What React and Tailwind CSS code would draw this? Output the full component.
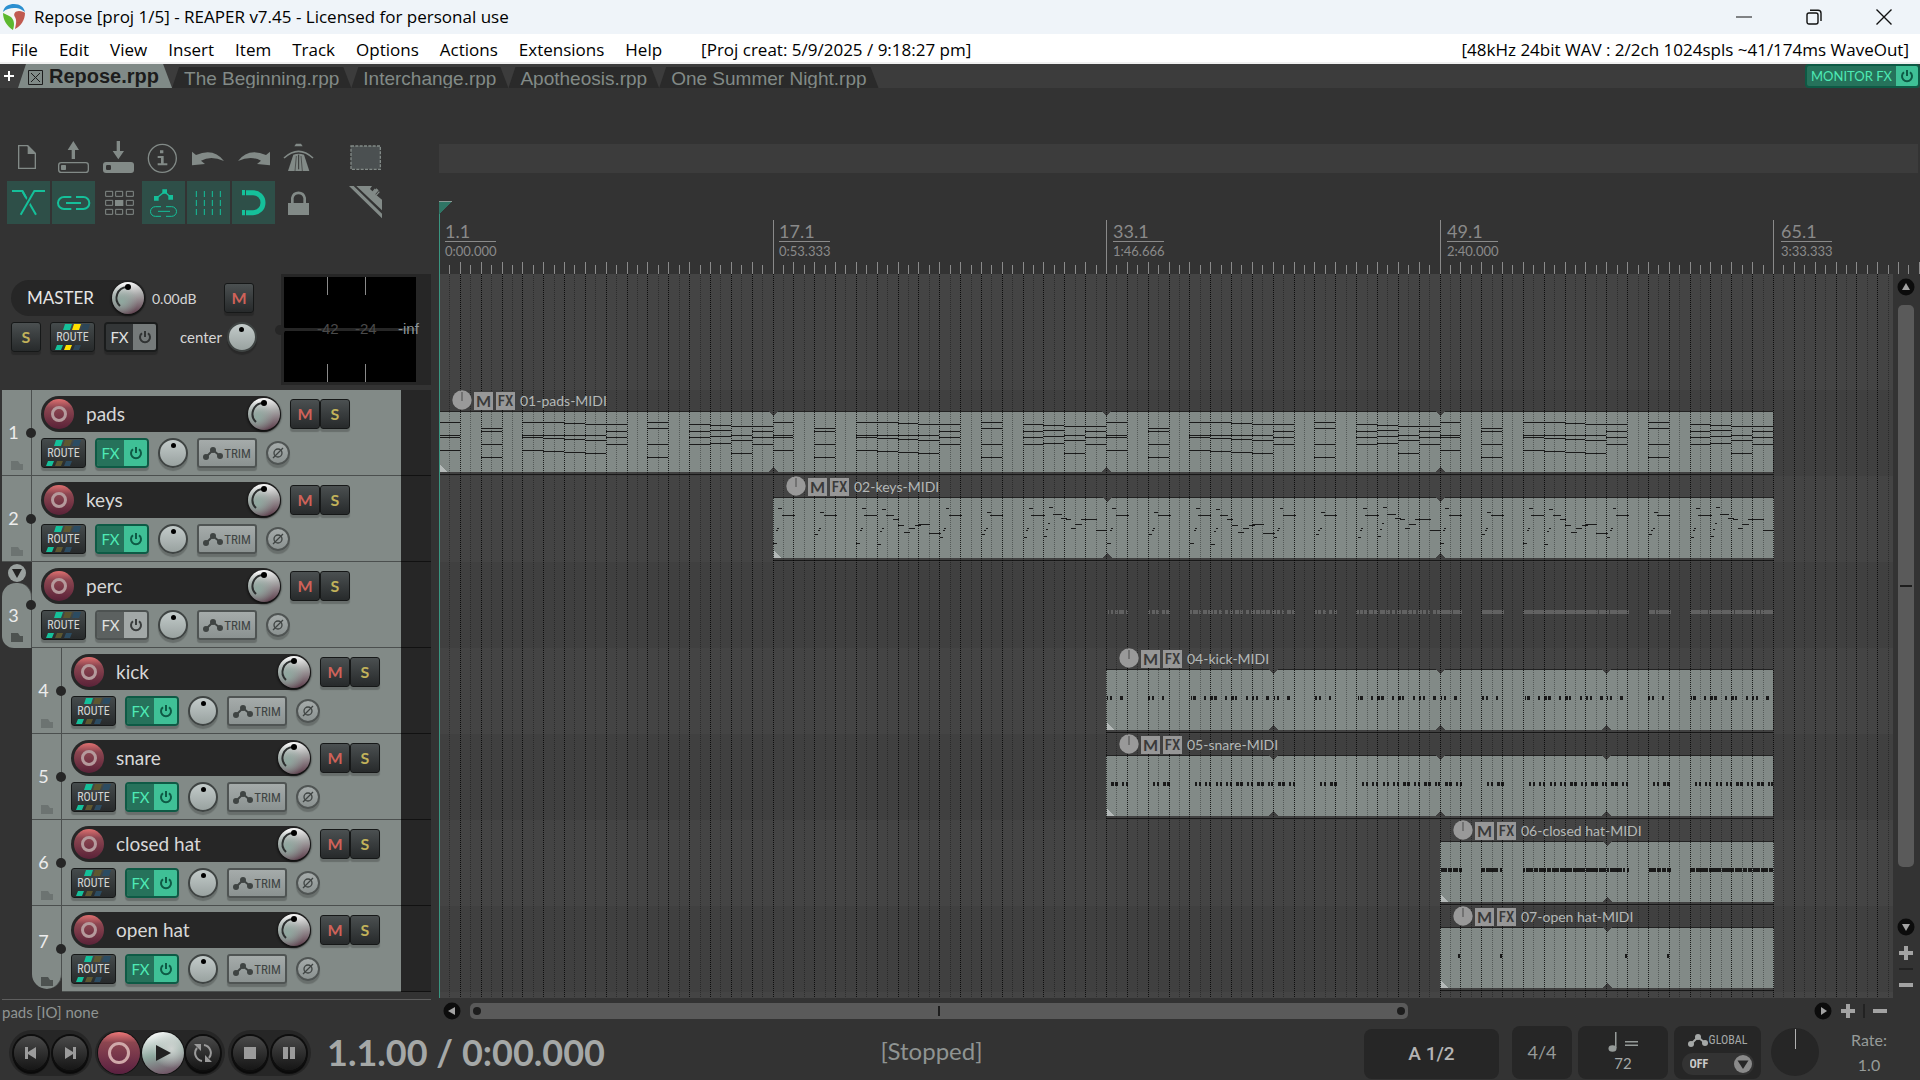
import React from "react";

const BAR = 333.5 / 16;

/* ---------- small drawings ---------- */

function Logo() {
  return (
    <svg viewBox="0 0 24 28" className="h-7 w-6 shrink-0" aria-hidden="true">
      <path d="M1 10C1 4 6 1 12 1s11 3 11 8c0 8-5 15-11 18C6 24 1 17 1 10z" fill="#f4f6f6" />
      <path d="M1 9C2 3 7 1 12 1c6 0 10 3 11 8-5-4-8-4-11-4C8 5 4 6 1 9z" fill="#2b8fd0" />
      <path d="M1 10c0 7 4 13 10 17 2-6 1-10-2-13C6 12 3 11 1 10z" fill="#5db82f" />
      <path d="M23 10c0 7-4 13-10 16 1-5 2-8 0-12-2-3 0-6 4-6 3 0 5 1 6 2z" fill="#c05a50" />
    </svg>
  );
}

function Power({ className }) {
  return (
    <svg viewBox="0 0 14 14" className={className} fill="none" stroke="currentColor" strokeWidth="2" aria-hidden="true">
      <path d="M4 3.2a5 5 0 1 0 6 0M7 1v6" />
    </svg>
  );
}

function Envelope({ className }) {
  return (
    <svg viewBox="0 0 20 13" className={className} fill="currentColor" stroke="currentColor" aria-hidden="true">
      <path d="M3 10L10 3l7 6" fill="none" strokeWidth="2" />
      <circle cx="3" cy="10" r="3" stroke="none" />
      <circle cx="10" cy="3" r="3" stroke="none" />
      <circle cx="17" cy="9" r="3" stroke="none" />
    </svg>
  );
}

const G = "#828a87";
const T = "#15c09a";
const TBG = "#2e4f48";

const tools = [
  { label: "New project", art: <><path d="M35 29H62L85 52V97H35Z" fill="none" stroke={G} strokeWidth="4" /><path d="M62 27L87 54H62Z" fill={G} /></> },
  { label: "Open project", art: <><path d="M64 15L81 42H69V69H59V42H47Z" fill={G} /><rect x="20" y="80" width="89" height="29" rx="8" fill="none" stroke={G} strokeWidth="4" /><rect x="27" y="87" width="15" height="15" rx="2" fill={G} /></> },
  { label: "Save project", art: <><path d="M59 15H69V45H81L64 70L47 45H59Z" fill={G} /><rect x="18" y="78" width="93" height="33" rx="9" fill={G} /><rect x="27" y="87" width="15" height="15" rx="4" fill="#333" /></> },
  { label: "Project settings", art: <><circle cx="61" cy="67" r="42" fill="none" stroke={G} strokeWidth="4" /><path d="M54 43h10v9H54zM47 60h18v22h11v6H47v-6h10V66H47z" fill={G} /></> },
  { label: "Undo", art: <path d="M15 47V88L54 84L42 74Q72 58 111 75Q80 34 27 57Z" fill={G} /> },
  { label: "Redo", art: <path d="M114 47V88L75 84L87 74Q57 58 18 75Q49 34 102 57Z" fill={G} /> },
  { label: "Metronome", art: <><path d="M57 23H72L77 31H52Z" fill={G} /><path d="M21 66Q65 26 108 66" fill="none" stroke={G} strokeWidth="5" /><path d="M49 56Q65 50 81 56L97 105H33Z" fill={G} /><path d="M65 56V100" stroke="#333" strokeWidth="3" /><path d="M58 60L54 105M72 60L76 105" stroke="#333" strokeWidth="2" /></> },
  { label: "Marquee selection", art: <rect x="21" y="30" width="88" height="70" fill="#4b5051" stroke={G} strokeWidth="4" strokeDasharray="9 4" /> },
  { label: "Auto crossfade", on: true, art: <g fill="none" strokeWidth="6"><path d="M15 30H46L87 101" stroke={T} /><path d="M82 30L41 101" stroke={TBG} strokeWidth="15" /><path d="M114 30H82L41 101" stroke={T} /><path d="M15 30H46L56 48" stroke={T} /></g> },
  { label: "Item grouping", on: true, art: <path d="M58 48H36A18 18 0 0 0 36 84H58M72 48H94A18 18 0 0 1 94 84H72M42 66H87" fill="none" stroke={T} strokeWidth="6" /> },
  { label: "Ripple editing", art: <><g fill="none" stroke={G} strokeWidth="3"><path d="M26 31h21v15H26zM56 31h21v15H56zM88 31h21v15H88zM26 58h21v15H26zM88 58h21v15H88zM26 85h21v15H26zM56 85h21v15H56zM88 85h21v15H88z" /></g><rect x="54" y="57" width="25" height="18" fill={G} /></> },
  { label: "Move envelopes with items", on: true, art: <><path d="M61 25h14v13H61zM36 45h14v14H36zM79 42h14v14H79z" fill={T} /><path d="M43 52L68 32L86 49" fill="none" stroke={T} strokeWidth="4" /><path d="M57 77H40A14 14 0 0 0 40 106H57M72 77H89A14 14 0 0 1 89 106H72M48 91H84" fill="none" stroke={T} strokeWidth="3" /></> },
  { label: "Grid lines", on: true, art: <path d="M28 30V102M52 30V102M76 30V102M100 30V102" stroke={T} strokeWidth="3" strokeDasharray="18 9" /> },
  { label: "Snap", on: true, art: <><path d="M42 35H63A30 30 0 0 1 63 95H42" fill="none" stroke={T} strokeWidth="15" /><path d="M30 27h9v16h-9zM30 87h9v16h-9z" fill={T} /></> },
  { label: "Lock", art: <><path d="M46 68V51A19 20 0 0 1 83 51V68" fill="none" stroke={G} strokeWidth="8" /><rect x="33" y="66" width="63" height="36" fill={G} /></> },
  { label: "Razor edit", art: <g fill={G}><path d="M15 15H29L114 98V112ZM37 15H84L78 24L88 33L97 22L104 28L94 40L114 56V88Z" /><path d="M94 24L84 36M106 32L96 43" stroke={G} strokeWidth="4" /></g> },
];

function Tool({ tool }) {
  return (
    <button aria-label={tool.label} className={tool.on ? "block size-[43px] bg-[#2e4f48]" : "block size-[43px]"}>
      <svg viewBox="0 0 129 129" className="size-full" aria-hidden="true">{tool.art}</svg>
    </button>
  );
}

/* ---------- shared controls ---------- */

function VolumeKnob({ label }) {
  return (
    <label className="relative block size-8 rounded-full bg-[radial-gradient(circle_at_30%_60%,#8fa89f_0%,transparent_55%),linear-gradient(170deg,#ffffff_5%,#a9a9a9_45%,#5d3e4c_95%)] shadow-[0_1px_2px_1px_#111]">
      <svg viewBox="0 0 32 32" className="size-full" fill="none" aria-hidden="true">
        <path d="M15 5A11 11 0 0 0 8 24" stroke="#2c2f2f" strokeWidth="2" />
        <circle cx="16" cy="5" r="3" fill="#000" />
      </svg>
      <input type="range" aria-label={label} className="absolute inset-0 size-full opacity-0" />
    </label>
  );
}

function PanKnob({ label }) {
  return (
    <label className="relative block size-[30px] shrink-0 rounded-full border-2 border-[#3f4443] bg-linear-to-b from-[#c3cbca] to-[#99a2a0] shadow-[0_3px_1px_rgba(0,0,0,0.2)]">
      <span className="mx-auto mt-[3px] block size-[5px] rounded-full bg-black" />
      <input type="range" aria-label={label} className="absolute inset-0 size-full opacity-0" />
    </label>
  );
}

const squareButton =
  "flex size-[30px] shrink-0 items-center justify-center rounded-[3px] border border-[#161818] bg-linear-to-b from-[#4b5051] to-[#272a2b] shadow-[0_3px_1px_rgba(0,0,0,0.2)] font-['Lato',sans-serif] font-bold text-base leading-none";

function MuteButton() {
  return <button aria-label="Mute" className={squareButton + " text-[#cf6259]"}>M</button>;
}

function SoloButton() {
  return <button aria-label="Solo" className={squareButton + " text-[#c2b25a]"}>S</button>;
}

function RouteButton({ bright }) {
  const second = bright ? "#ffe000" : "#5d5730";
  const third = bright ? "#2c4658" : "#2c4c62";
  return (
    <button className="relative flex h-[30px] w-[45px] shrink-0 items-center justify-center rounded-[3px] border border-[#161818] bg-linear-to-b from-[#454b4c] to-[#272a2b] font-['Roboto_Condensed','Roboto',sans-serif] text-[12px] leading-none text-[#d2d5d4] shadow-[0_3px_1px_rgba(0,0,0,0.2)]">
      <svg viewBox="0 0 43 28" className="absolute inset-0 size-full" aria-hidden="true">
        <path d="M14 1h7l-2 6h-7zM6 22h6l-2 5H4z" fill="#15c09a" />
        <path d="M23 1h7l-2 6h-7zM15 22h6l-2 5h-6z" fill={second} />
        <path d="M32 1h7l-2 6h-7zM24 22h6l-2 5h-6z" fill={third} />
      </svg>
      <span className="relative">ROUTE</span>
    </button>
  );
}

const fxTones = {
  green: ["border-[#0e5a45]", "bg-[#26725b] text-[#4eeab5]", "bg-[#3fc096] text-[#0e5a45]"],
  grey: ["border-[#4d5251]", "bg-[#5c6160] text-[#e0e2e1]", "bg-[#a2a8a7] text-[#3a3d3d]"],
  dark: ["border-[#1a1c1c]", "bg-[#333637] text-[#e0e2e1]", "bg-[#757a7a] text-[#303333]"],
};

function FxButton({ tone }) {
  const [edge, left, right] = fxTones[tone];
  return (
    <span className={"flex h-[30px] w-[54px] shrink-0 overflow-hidden rounded-[4px] border-2 font-['Lato',sans-serif] text-[15px] leading-none shadow-[0_3px_1px_rgba(0,0,0,0.2)] " + edge}>
      <button className={"flex flex-1 items-center justify-center " + left}>FX</button>
      <button aria-label="Bypass FX" className={"flex w-[23px] items-center justify-center " + right}>
        <Power className="size-3.5" />
      </button>
    </span>
  );
}

/* ---------- header ---------- */

function TitleBar() {
  return (
    <div className="flex h-[34px] items-center bg-[#eff4f9] font-['Open_Sans',sans-serif] text-[17px] text-black">
      <div className="flex flex-1 items-center gap-2 pl-0.5">
        <Logo />
        <h1>Repose [proj 1/5] - REAPER v7.45 - Licensed for personal use</h1>
      </div>
      <div className="flex items-center gap-[54px] pr-7">
        <button aria-label="Minimize"><svg viewBox="0 0 16 16" className="size-4"><path d="M0 8h16" stroke="#111" /></svg></button>
        <button aria-label="Restore">
          <svg viewBox="0 0 16 16" className="size-4" fill="none" stroke="#111" strokeWidth="1.4">
            <rect x="1" y="4" width="11" height="11" rx="2" /><path d="M4 1.2h8a3 3 0 0 1 3 3V12" />
          </svg>
        </button>
        <button aria-label="Close"><svg viewBox="0 0 16 16" className="size-4"><path d="M.5.5l15 15M15.500.5l-15 15" stroke="#111" strokeWidth="1.4" /></svg></button>
      </div>
    </div>
  );
}

const menus = ["File", "Edit", "View", "Insert", "Item", "Track", "Options", "Actions", "Extensions", "Help"];

function MenuBar() {
  return (
    <nav className="flex h-[30px] items-center justify-between border-b-2 border-[#f0f0f0] bg-white pt-1 pr-[11px] pl-[11px] font-['Open_Sans',sans-serif] text-[17px] leading-6 text-black">
      <div className="flex gap-[21px]">
        {menus.map((m) => <button key={m}>{m}</button>)}
        <span className="ml-[18px]">[Proj creat: 5/9/2025 / 9:18:27 pm]</span>
      </div>
      <span>[48kHz 24bit WAV : 2/2ch 1024spls ~41/174ms WaveOut]</span>
    </nav>
  );
}

function Tabs() {
  return (
    <div className="flex h-6 items-stretch bg-[#3c3c3c] font-['Liberation_Sans',sans-serif]">
      <button aria-label="New project tab" className="flex w-[18px] items-center justify-center text-white">
        <svg viewBox="0 0 10 10" className="size-2.5"><path d="M0 5h10M5 0v10" stroke="#fff" strokeWidth="2" /></svg>
      </button>
      <button className="flex items-center gap-1.5 bg-[#808a87] pr-[13px] pl-[10px] text-[20px] leading-6 font-bold text-[#1c1c1c] [clip-path:polygon(8px_0,calc(100%_-_9px)_0,100%_100%,0_100%)]">
        <svg viewBox="0 0 15 15" className="mt-0.5 size-[15px]" fill="none" stroke="#1c1c1c"><path d="M.5.5h14v14H.5zM3 3l9 9M12 3l-9 9" /></svg>
        Repose.rpp
      </button>
      {["The Beginning.rpp", "Interchange.rpp", "Apotheosis.rpp", "One Summer Night.rpp"].map((t) => (
        <button key={t} className="mt-[3px] h-[21px] overflow-hidden bg-[#2a2a2a] px-3 text-[19px] leading-6 whitespace-nowrap text-[#828a87] [clip-path:polygon(7px_0,calc(100%_-_8px)_0,100%_100%,0_100%)]">
          {t}
        </button>
      ))}
      <div className="ml-auto flex overflow-hidden rounded-[4px] border-2 border-[#0e5a45] font-['Lato',sans-serif] text-[13px] leading-none">
        <button className="bg-[#26725b] px-1 text-[#4eeab5]">MONITOR FX</button>
        <button aria-label="Bypass monitor FX" className="flex w-[22px] items-center justify-center bg-[#3fc096] text-[#0e5a45]">
          <Power className="size-3.5" />
        </button>
      </div>
    </div>
  );
}

/* ---------- track panels ---------- */

function Master() {
  return (
    <section className="flex h-[116px] pl-[11px]">
      <div className="flex w-[270px] flex-col gap-1.5 pt-1.5">
        <div className="flex items-center">
          <div className="flex h-9 w-[135px] items-center justify-between rounded-full bg-[#262626] pr-0.5 pl-4 text-[17px] text-[#e6e6e6]">
            MASTER
            <VolumeKnob label="Master volume" />
          </div>
          <span className="ml-1.5 flex-1 text-[14px] text-[#d6d6d6]">0.00dB</span>
          <div className="mr-[27px]"><MuteButton /></div>
        </div>
        <div className="flex items-center gap-[9px]">
          <SoloButton />
          <RouteButton bright />
          <FxButton tone="dark" />
          <span className="ml-[13px] text-[15px] text-[#d6d6d6]">center</span>
          <div className="-ml-1"><PanKnob label="Master pan" /></div>
        </div>
      </div>
      <div className="relative h-[111px] w-[150px] bg-[#262626] p-[3px] font-['Liberation_Sans',sans-serif] text-[15px]">
        <svg viewBox="0 0 132 105" className="block h-[105px] w-[132px] bg-black" aria-hidden="true">
          <path d="M43.500 0v18M81.500 0v18M43.500 87v18M81.500 87v18" stroke="#8a8a8a" />
          <path d="M0 52.500h132" stroke="#262626" strokeWidth="3" />
        </svg>
        <span className="absolute top-[51px] -left-1.5 size-2.5 rounded-full bg-[#262626]" />
        <span className="absolute top-[44px] left-9 text-[#4a4a4a]">-42</span>
        <span className="absolute top-[44px] left-[74px] text-[#4a4a4a]">-24</span>
        <span className="absolute top-[44px] left-[117px] text-[#8f979a]">-inf</span>
      </div>
    </section>
  );
}

function Folder({ strong }) {
  return (
    <svg viewBox="0 0 12 9" className="absolute bottom-1.5 left-[9px] h-[9px] w-3" aria-hidden="true">
      <path d="M0 0h7l2 3h3v6H0z" fill={strong ? "#4d5250" : "#6c7371"} />
    </svg>
  );
}

function TrackPanel({ n, name, child, folder, last, fx }) {
  return (
    <section className={child ? "flex h-[86px] pl-8" : "flex h-[86px] pl-0.5"}>
      <div className="relative w-[30px] shrink-0">
        {folder && (
          <button aria-label="Collapse folder" className="absolute top-0.5 left-1.5 flex size-[18px] items-center justify-center rounded-full bg-[#9aa19f]">
            <svg viewBox="0 0 10 9" className="h-[9px] w-2.5"><path d="M0 0h10L5 9z" fill="#222" /></svg>
          </button>
        )}
        <div
          className={
            folder
              ? "mt-[21px] flex h-[65px] items-center justify-center rounded-t-[14px] rounded-bl-xl border-r border-[#4b4f4e] bg-[#828a87]"
              : last
                ? "flex h-[83px] items-center justify-center rounded-b-[15px] border-r border-[#4b4f4e] bg-[#828a87] pb-3"
                : "flex h-[86px] items-center justify-center border-r border-b border-[#4b4f4e] bg-[#828a87]"
          }
        >
          <span className="pr-1.5 pb-0.5 text-[18px] leading-none text-[#ececec]">{n}</span>
        </div>
        <Folder strong={folder || last} />
        <span className="absolute top-[38px] -right-1 z-10 size-2.5 rounded-full bg-[#262626]" />
      </div>
      <div className="flex flex-1 flex-col gap-1.5 border-b border-[#4b4f4e] bg-[#828a87] pt-1.5 pl-[9px]">
        <div className="flex items-center">
          <div className="flex h-9 w-60 items-center rounded-full bg-[#262626] pr-px pl-[3px]">
            <button aria-label="Record arm" className="flex size-[30px] items-center justify-center rounded-full bg-linear-to-b from-[#e07070] via-[#8c4650] via-30% to-[#5a2238]">
              <span className="size-4 rounded-full border-[3px] border-[#b59a9c]" />
            </button>
            <span className="flex-1 pl-3 text-[19px] text-[#d8d8d8]">{name}</span>
            <VolumeKnob label={name + " volume"} />
          </div>
          <div className="ml-[9px] flex"><MuteButton /><SoloButton /></div>
        </div>
        <div className="flex items-center gap-[9px]">
          <RouteButton />
          <FxButton tone={fx} />
          <PanKnob label={name + " pan"} />
          <button className="flex h-[30px] w-[60px] items-center justify-center gap-px rounded-[3px] border-2 border-[#4f5453] bg-linear-to-b from-[#a5abaa] to-[#8b9291] font-['Roboto_Condensed','Roboto',sans-serif] text-[13px] leading-none text-[#3f4443] shadow-[0_3px_1px_rgba(0,0,0,0.2)]">
            <Envelope className="h-[13px] w-5" />
            TRIM
          </button>
          <button aria-label="Phase" className="flex size-6 items-center justify-center rounded-full border-2 border-[#4f5453] bg-linear-to-b from-[#a5abaa] to-[#8b9291] text-[#3f4443] shadow-[0_3px_1px_rgba(0,0,0,0.2)]">
            <svg viewBox="0 0 12 12" className="size-3" fill="none" stroke="currentColor" strokeWidth="1.3"><circle cx="6" cy="6" r="4" /><path d="M1 11L11 1" /></svg>
          </button>
        </div>
      </div>
      <div className="mr-2 w-[30px] border-b border-[#111] bg-[#262626]" />
    </section>
  );
}

/* ---------- notes ---------- */

/* [first bar, last bar, y] for each held chord tone */
const padNotes = [
  [0, 1, 11], [0, 1, 24], [0, 1, 26], [0, 1, 39],
  [2, 3, 17], [2, 3, 20], [2, 3, 33], [2, 3, 46],
  [4, 6, 11], [6, 7, 12], [7, 9, 13], [4, 8, 24], [8, 9, 20],
  [4, 5, 26], [5, 6, 27], [6, 7, 28], [7, 8, 29], [8, 9, 26],
  [4, 5, 39], [5, 6, 40], [6, 7, 41], [7, 8, 42], [8, 9, 33],
  [10, 11, 11], [10, 11, 17], [10, 11, 33], [10, 11, 46],
  [12, 13, 13], [12, 13, 20], [12, 13, 26], [12, 13, 33],
  [13, 14, 14], [13, 14, 19], [13, 14, 25], [13, 14, 32],
  [14, 16, 15], [14, 15, 24], [14, 15, 29], [14, 15, 42],
  [15, 16, 20], [15, 16, 26], [15, 16, 33],
].map(([a, b, y]) => [a * BAR, (b - a) * BAR, y]);

/* [x, width, y] */
const keyNotes = [
  [0, 4, 46], [3, 2, 33], [4, 2, 31], [5, 4, 11], [9, 13, 18],
  [42, 3, 37], [45, 2, 33], [46, 2, 31], [47, 4, 15], [51, 13, 18],
  [83, 4, 46], [87, 2, 33], [88, 2, 31], [89, 4, 11], [91, 13, 18],
  [104, 4, 47], [107, 2, 34], [109, 2, 31], [109, 4, 12], [113, 8, 18], [120, 6, 22],
  [125, 6, 28], [131, 6, 35], [136, 6, 31], [142, 6, 28], [146, 11, 27], [156, 12, 36],
  [167, 3, 40], [170, 2, 33], [171, 2, 31], [173, 3, 11], [176, 13, 18],
  [209, 3, 37], [211, 2, 33], [213, 2, 31], [214, 4, 15], [217, 13, 18],
  [251, 3, 40], [253, 2, 33], [254, 2, 31], [256, 4, 11], [258, 14, 18],
  [271, 3, 39], [273, 2, 32], [275, 2, 26], [276, 4, 10], [280, 9, 17], [288, 6, 21],
  [293, 5, 22], [298, 5, 31], [302, 7, 27], [308, 16, 22], [323, 11, 33],
];

const kickHits = [[1, 1], [4, 2], [14, 3], [42, 2], [46, 2], [56, 2], [85, 1], [87, 3], [98, 2], [104, 3], [108, 3], [119, 2], [125, 3], [129, 2], [140, 2], [146, 2], [150, 2], [160, 3]];
const snareHits = [[5, 3], [9, 3], [16, 2], [20, 2], [47, 2], [51, 2], [57, 3], [61, 3], [89, 2], [93, 2], [99, 2], [103, 2], [110, 2], [114, 2], [120, 2], [124, 2], [130, 3], [134, 3], [141, 2], [145, 2], [151, 3], [155, 3], [162, 2], [165, 2]];

/* run edges, three units to the pixel */
const runs = (edges) => edges.map(([a, b]) => [a / 3, (b - a) / 3]);
const closedHits = runs([
  [2, 20], [23, 35], [38, 53], [56, 65], [123, 136], [139, 176], [180, 187], [248, 254], [257, 278], [281, 293], [296, 317], [320, 332], [335, 356],
  [359, 395], [398, 434], [437, 473], [476, 497], [500, 506], [509, 545], [548, 554], [560, 566], [626, 647], [650, 662], [665, 677], [680, 692],
  [749, 764], [767, 803], [806, 842], [845, 881], [884, 905], [908, 920], [923, 935], [938, 959], [962, 983], [986, 999],
]);
const openHits = runs([[53, 60], [179, 186], [554, 560], [680, 686]]);

/* run edges, on a scale of 2.306 units to the pixel */
const percRuns = [
  [18, 22], [25, 31], [34, 42], [45, 55], [60, 64], [111, 116], [119, 127], [130, 136], [143, 151], [153, 161], [208, 212], [214, 225], [228, 234],
  [238, 247], [250, 260], [263, 271], [274, 281], [288, 295], [299, 308], [311, 321], [324, 330], [336, 344], [348, 357], [360, 370], [372, 381],
  [383, 393], [397, 405], [408, 416], [419, 425], [431, 440], [444, 450], [496, 500], [504, 510], [514, 521], [528, 535], [540, 546], [590, 597],
  [600, 606], [609, 617], [620, 630], [633, 642], [645, 657], [660, 670], [673, 681], [685, 695], [697, 707], [710, 719], [722, 729], [733, 743],
  [746, 753], [756, 762], [768, 776], [778, 812], [814, 834], [880, 932], [976, 1148], [1151, 1174], [1176, 1220], [1266, 1281], [1283, 1295],
  [1297, 1317], [1360, 1402], [1404, 1462], [1464, 1510], [1513, 1522], [1524, 1553],
].map(([a, b]) => [(a - 14) / 2.306, (b - a) / 2.306]);

const tracks = [
  { n: 1, name: "pads", fx: "green", item: { label: "01-pads-MIDI", start: 0, bars: 64, loop: 16, notes: padNotes } },
  { n: 2, name: "keys", fx: "green", item: { label: "02-keys-MIDI", start: 16, bars: 48, loop: 16, notes: keyNotes } },
  { n: 3, name: "perc", fx: "grey", folder: true },
  { n: 4, name: "kick", fx: "green", child: true, item: { label: "04-kick-MIDI", start: 32, bars: 32, loop: 8, hits: kickHits } },
  { n: 5, name: "snare", fx: "green", child: true, item: { label: "05-snare-MIDI", start: 32, bars: 32, loop: 8, hits: snareHits } },
  { n: 6, name: "closed hat", fx: "green", child: true, item: { label: "06-closed hat-MIDI", start: 48, bars: 16, loop: 8, hits: closedHits, once: true } },
  { n: 7, name: "open hat", fx: "green", child: true, last: true, item: { label: "07-open hat-MIDI", start: 48, bars: 16, loop: 8, hits: openHits, once: true } },
];

/* ---------- timeline ---------- */

function Item({ item }) {
  const width = Math.round(item.bars * BAR);
  const loops = item.bars / item.loop;
  const passes = item.once ? [0] : Array.from({ length: loops }, (_, i) => i);
  const seams = Array.from({ length: loops - 1 }, (_, i) => Math.round((i + 1) * item.loop * BAR));
  return (
    <div style={{ marginLeft: Math.round(item.start * BAR), width }}>
      <div className="relative z-20 flex h-[21px] items-center gap-0.5 pl-[13px] text-[14px] leading-none text-[#b4b8b7]">
        <svg viewBox="0 0 20 20" className="-mt-px size-5" aria-hidden="true"><circle cx="10" cy="10" r="9.700" fill="#999" /><path d="M10 2v9" stroke="#666" strokeWidth="1.500" /></svg>
        <button aria-label="Mute item" className="h-[18px] w-[19px] bg-[#979797] text-center text-base leading-[18px] font-bold text-[#3a3a3a]">M</button>
        <button aria-label="Item FX" className="ml-px h-[18px] w-[19px] bg-[#979797] text-center font-['Roboto_Condensed','Roboto',sans-serif] text-[15px] leading-[18px] font-medium text-[#3a3a3a]">FX</button>
        <span className="pl-[3px] whitespace-nowrap">{item.label}</span>
      </div>
      <svg viewBox={"0 0 " + width + " 64"} width={width} height="64" className="block" shapeRendering="crispEdges" aria-hidden="true">
        <rect width={width} height="64" fill="#828a87" />
        <rect width={width} height="1" fill="#222" />
        <rect y="61" width={width} height="2" fill="#414141" />
        <rect y="63" width={width} height="1" fill="#181818" />
        {passes.map((p) => (
          <g key={p} fill="#1a1a1a">
            {(item.notes || []).map(([x, w, y], i) => <rect key={i} x={p * item.loop * BAR + x} y={y} width={w} height="1" />)}
            {(item.hits || []).map(([x, w], i) => <rect key={i} x={Math.round(p * item.loop * BAR + x)} y="27" width={w} height="4" />)}
          </g>
        ))}
        {seams.map((x) => <path key={x} d={"M" + (x - 5) + " 0h10l-5 5zM" + (x - 5) + " 61h10l-5-5z"} fill="#414141" />)}
        <path d="M1 54l7 7H1z" fill="#b4b9b8" />
      </svg>
    </div>
  );
}

const halfBars = Array.from({ length: 400 }, (_, i) => i);
const tickX = (i) => Math.round((i * BAR) / 2);

function Grid() {
  return (
    <svg className="pointer-events-none absolute inset-0 z-10 size-full" shapeRendering="crispEdges" aria-hidden="true">
      {halfBars.map((i) => (
        <line key={i} x1={tickX(i) + 0.5} x2={tickX(i) + 0.5} y1="0" y2="100%" stroke="#000" strokeOpacity={i % 2 ? 0.35 : 0.8} strokeDasharray="1 1" />
      ))}
      <rect width="1" height="100%" fill="#3a9580" />
    </svg>
  );
}

const marks = [["1.1", "0:00.000"], ["17.1", "0:53.333"], ["33.1", "1:46.666"], ["49.1", "2:40.000"], ["65.1", "3:33.333"]];

function Ruler() {
  return (
    <div className="relative h-[101px] overflow-hidden">
      <svg className="absolute inset-0 size-full" shapeRendering="crispEdges" aria-hidden="true">
        {halfBars.map((i) => {
          const top = i === 0 ? 92 : i % 32 === 0 ? 47 : i % 2 ? 92 : 89;
          return <rect key={i} x={tickX(i)} y={top} width="1" height={101 - top} fill="#8a8a8a" />;
        })}
        <rect y="28" width="1" height="73" fill="#3a9580" />
        <path d="M0 28h13L0 41z" fill="#2f7565" />
        <path d="M0 28.500h13" stroke="#8a9a96" />
      </svg>
      <div className="relative flex pt-[49px] pl-1.5 text-[#8a8a8a]">
        {marks.map(([bar, time]) => (
          <div key={bar} className="w-[334px] shrink-0">
            <div className="w-[51px] border-b border-[#8a8a8a] text-[18px] leading-[19px]">{bar}</div>
            <div className="text-[13px] leading-[19px]">{time}</div>
          </div>
        ))}
      </div>
    </div>
  );
}

function Arrow({ d, label }) {
  return (
    <button aria-label={label} className="shrink-0">
      <svg viewBox="0 0 18 18" className="size-[18px]"><circle cx="9" cy="9" r="8.500" fill="#0c0c0c" /><path d={d} fill="#a3a3a3" /></svg>
    </button>
  );
}

function Zoom({ plus, label }) {
  return (
    <button aria-label={label} className="shrink-0">
      <svg viewBox="0 0 14 14" className="size-3.5" fill="#a3a3a3"><path d={plus ? "M5 0h4v5h5v4H9v5H5V9H0V5h5z" : "M0 5h14v4H0z"} /></svg>
    </button>
  );
}

function Arrange() {
  return (
    <div className="flex">
      <div className="relative min-w-0 flex-1 overflow-hidden bg-[#444]">
        <Grid />
        <div className="h-[116px]" />
        {tracks.map((t) => (
          <div key={t.n} className={t.n % 2 ? "h-[86px] bg-[#404040]" : "h-[86px] bg-[#444]"}>
            {t.item ? (
              <Item item={t.item} />
            ) : (
              <svg className="block h-full w-full" shapeRendering="crispEdges" aria-hidden="true">
                {percRuns.map(([x, w]) => <rect key={x} x={667 + x} y="48" width={w} height="4" fill="#626262" />)}
              </svg>
            )}
          </div>
        ))}
        <div className="h-1.5" />
      </div>
      <div className="flex w-[27px] flex-col items-center pt-1 pr-0.5">
        <Arrow label="Scroll up" d="M9 5l4 7H5z" />
        <div className="mt-[9px] flex w-4 flex-1 items-center rounded-[5px] bg-[#5a5a5a]">
          <span className="h-0.5 w-full border-x-2 border-[#5a5a5a] bg-[#1d1d1d]" />
        </div>
        <div className="h-[51px]" />
        <Arrow label="Scroll down" d="M9 13l4-7H5z" />
        <div className="mt-2.5 mb-1.5 flex flex-col items-center gap-2">
          <Zoom plus label="Zoom in vertically" />
          <span className="h-0.5 w-3.5 bg-[#222]" />
          <Zoom label="Zoom out vertically" />
        </div>
      </div>
    </div>
  );
}

function HorizontalScroll() {
  return (
    <div className="flex h-[26px] items-center pr-[33px] pl-1">
      <Arrow label="Scroll left" d="M5 9l7-4v8z" />
      <div className="mr-[406px] ml-[9px] flex h-4 flex-1 items-center justify-between rounded-[5px] bg-[#5a5a5a] px-[3px]">
        <span className="size-2 rounded-full bg-[#1d1d1d]" />
        <span className="h-2.5 w-0.5 bg-[#1d1d1d]" />
        <span className="size-2 rounded-full bg-[#1d1d1d]" />
      </div>
      <Arrow label="Scroll right" d="M13 9L7 5v8z" />
      <div className="ml-[9px] flex items-center gap-2">
        <Zoom plus label="Zoom in" />
        <span className="h-3.5 w-0.5 bg-[#222]" />
        <Zoom label="Zoom out" />
      </div>
    </div>
  );
}

/* ---------- transport ---------- */

function Round({ label, children }) {
  return (
    <button aria-label={label} className="flex size-[34px] items-center justify-center rounded-full bg-linear-to-b from-[#4a4a4a] to-[#161616] text-[#9b9b9b] shadow-[0_0_0_2px_#0e0e0e,0_3px_1px_1px_#0a0a0a]">
      <svg viewBox="0 0 20 20" className="size-5" fill="currentColor">{children}</svg>
    </button>
  );
}

function Transport() {
  return (
    <footer className="flex h-14 items-center pl-[9px] font-['Lato',sans-serif] text-[#a5a8a7]">
      <div className="mt-0.5 flex items-center gap-[3px]">
        <div className="flex h-[46px] items-center gap-[5px] rounded-full bg-[#262626] px-[5px]">
          <Round label="Go to start"><path d="M4 4h3v5l8-5v12l-8-5v5H4z" /></Round>
          <Round label="Go to end"><path d="M16 4h-3v5L5 4v12l8-5v5h3z" /></Round>
        </div>
        <div className="flex h-[46px] items-center gap-0.5 rounded-full bg-[#262626] pr-[5px] pl-[3px]">
          <button aria-label="Record" className="flex size-[42px] items-center justify-center rounded-full bg-linear-to-b from-[#f07878] via-[#8c4650] via-25% to-[#5a2040] shadow-[0_0_0_1px_#111]">
            <span className="size-[22px] rounded-full border-[3px] border-[#d0a9aa]" />
          </button>
          <button aria-label="Play" className="flex size-[42px] items-center justify-center rounded-full bg-[radial-gradient(circle_at_70%_40%,#cfd3d1_0%,transparent_50%),linear-gradient(165deg,#ffffff_5%,#8faaa0_50%,#6d4d60_95%)] shadow-[0_0_0_1px_#111]">
            <svg viewBox="0 0 18 18" className="size-[18px]"><path d="M2 1l15 8-15 8z" fill="#222" /></svg>
          </button>
          <Round label="Repeat">
            <g fill="none" stroke="currentColor" strokeWidth="2"><path d="M9 18A8 8 0 0 1 4 5M11 2A8 8 0 0 1 16 15" /></g>
            <path d="M1 1h7v7zM19 19h-7v-7z" />
          </Round>
        </div>
        <div className="flex h-[46px] items-center gap-[5px] rounded-full bg-[#262626] px-[5px]">
          <Round label="Stop"><path d="M4 4h12v12H4z" /></Round>
          <Round label="Pause"><path d="M4 4h5v12H4zM11 4h5v12h-5z" /></Round>
        </div>
      </div>
      <output className="ml-4 text-[36px] leading-none font-bold whitespace-nowrap">1.1.00 / 0:00.000</output>
      <div className="flex-1 pb-0.5 text-center text-[24px] leading-none text-[#8f9492]">
        <span className="mr-[106px]">[Stopped]</span>
      </div>
      <div className="flex items-center gap-1.5">
        <button className="mt-1 mr-[7px] h-[50px] w-[135px] rounded-lg bg-[#262626] font-['Roboto',sans-serif] text-[19px] font-medium text-[#b4b4b4]">A 1/2</button>
        <button className="h-[53px] w-[60px] rounded-lg bg-[#262626] text-[18px] text-[#969b99]">4/4</button>
        <div className="flex h-[53px] w-[90px] flex-col items-center justify-between rounded-lg bg-[#262626] pt-1.5 pb-2 text-[15px] leading-none">
          <svg viewBox="0 0 30 20" className="h-5 w-[30px]" fill="#969b99"><path d="M7 0h1.500v16H7zM17 9h13v1.500H17zM17 12.500h13V14H17z" /><ellipse cx="4.500" cy="16.500" rx="4" ry="3.200" /></svg>
          72
        </div>
        <div className="flex h-[53px] w-[87px] flex-col items-center justify-between rounded-lg bg-[#262626] pt-2 pb-1 font-['Roboto_Condensed','Roboto',sans-serif] leading-none">
          <span className="flex items-center gap-px text-[12px]"><Envelope className="h-[13px] w-5" />GLOBAL</span>
          <span className="relative flex h-[22px] w-[72px] items-center rounded-full bg-[#333]">
            <select aria-label="Global automation mode" className="size-full appearance-none bg-transparent pl-2 text-[12px] font-bold text-[#c9c9c9]">
              <option>OFF</option>
            </select>
            <svg viewBox="0 0 18 18" className="pointer-events-none absolute right-0.5 size-[18px]"><circle cx="9" cy="9" r="9" fill="#8a8a8a" /><path d="M3.500 5.500h11L9 14z" fill="#262626" /></svg>
          </span>
        </div>
        <label className="relative ml-1 block size-12 rounded-full bg-[#262626]">
          <span className="mx-auto mt-px block h-5 w-px bg-[#b0b0b0]" />
          <input type="range" aria-label="Play rate" className="absolute inset-0 size-full opacity-0" />
        </label>
        <div className="mr-[7px] w-[88px] text-center text-base leading-[25px] text-[#969b99]">
          <div>Rate:</div>
          <div>1.0</div>
        </div>
      </div>
    </footer>
  );
}

export default function App() {
  return (
    <div className="flex min-h-screen flex-col bg-[#333] font-['Lato',sans-serif]">
      <TitleBar />
      <MenuBar />
      <Tabs />
      <main className="flex flex-1">
        <div className="flex w-[439px] shrink-0 flex-col">
          <div className="mt-12 mb-[50px] grid grid-cols-[repeat(7,43px)_67px] gap-0.5 pl-[7px]">
            {tools.map((t, i) => (
              <div key={t.label} className={i % 8 === 7 ? "pl-[22px]" : ""}><Tool tool={t} /></div>
            ))}
          </div>
          <Master />
          {tracks.map((t) => <TrackPanel key={t.n} {...t} />)}
          <div className="mt-[7px] mr-2 ml-0.5 border-t border-[#5e5e5e] text-[15px] leading-6 text-[#8f9492]">pads [IO] none</div>
        </div>
        <div className="flex min-w-0 flex-1 flex-col">
          <div className="mt-14 mr-0.5 h-[29px] bg-[#3c3c3c]" />
          <Ruler />
          <Arrange />
          <HorizontalScroll />
        </div>
      </main>
      <Transport />
    </div>
  );
}
